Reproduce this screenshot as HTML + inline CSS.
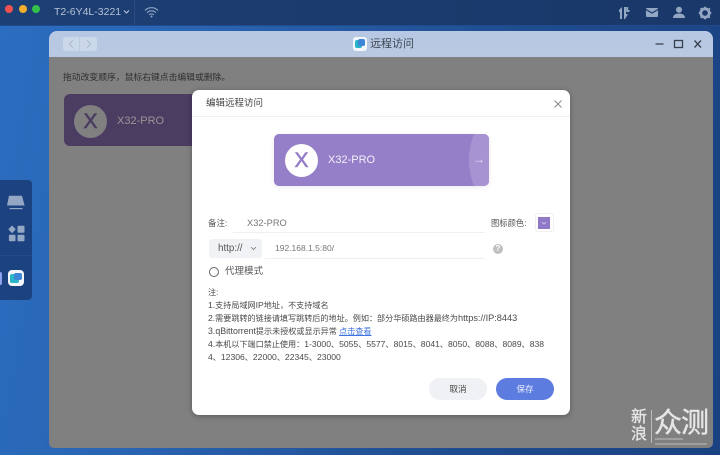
<!DOCTYPE html>
<html lang="zh"><head><meta charset="utf-8"><style>
*{box-sizing:border-box;margin:0;padding:0}
html,body{width:720px;height:455px;overflow:hidden;background:#16376f}
body{position:relative;font-family:"Liberation Sans","Noto Sans CJK SC",sans-serif}
#all{position:absolute;left:0;top:0;width:720px;height:455px;filter:blur(.3px)}
.a{position:absolute;white-space:nowrap}
#bg{left:0;top:0;width:720px;height:455px;background:linear-gradient(100deg,#2b6dc0 0%,#2a64b2 25%,#1f4d90 65%,#1a4282 100%)}
#top{left:0;top:0;width:720px;height:25px;background:linear-gradient(90deg,#1d4074,#1b3a6e 50%,#1a3869);box-shadow:0 1px 0 #1f4a8c}
#win{left:49px;top:31px;width:664px;height:417px;background:#808080;border-radius:8px 8px 5px 5px;overflow:hidden}
#tb{left:0;top:0;width:664px;height:26px;background:linear-gradient(180deg,#b6c8e3,#b9c9e1)}
#modal{left:192px;top:90px;width:378px;height:325px;background:#fff;border-radius:7px;box-shadow:0 1px 6px rgba(0,0,0,.3)}
.line{position:absolute;height:1px;background:#eff0f3}
.t{font-size:8.500px;color:#555;line-height:13px}
.n{font-size:8.100px;color:#4a4a4a;line-height:13px;left:16px}
.n b{font-weight:normal;font-size:9.200px}
.n i{font-style:normal;font-size:8.600px}
.n u{text-decoration:none;font-size:8.800px}
.x{font-size:21px;line-height:33px;text-align:center;-webkit-text-stroke:.6px currentColor}
</style></head><body><div id="all">
<div class="a" id="bg"></div>
<div class="a" id="top"></div>
<div class="a" style="left:5px;top:5px;width:8px;height:8px;border-radius:50%;background:#f0524f"></div>
<div class="a" style="left:19px;top:5px;width:8px;height:8px;border-radius:50%;background:#f3b02c"></div>
<div class="a" style="left:32px;top:5px;width:8px;height:8px;border-radius:50%;background:#33c24a"></div>
<div class="a" style="left:54px;top:5px;font-size:10.500px;line-height:14px;color:#b4c1d6">T2-6Y4L-3221</div>
<svg class="a" style="left:123px;top:9px" width="7" height="6"><path d="M1 1.500 3.500 4 6 1.500" fill="none" stroke="#c2cede" stroke-width="1"/></svg>
<div class="a" style="left:134px;top:0;width:1px;height:25px;background:#2a4a80"></div>
<svg class="a" style="left:144px;top:6px" width="15" height="12" fill="none" stroke="#8fa5c4" stroke-width="1.100"><path d="M1 4.500C4.500 .8 10.500 .8 14 4.500M3 6.800C5.500 4.200 9.500 4.200 12 6.800M5.200 8.800C6.400 7.600 8.600 7.600 9.800 8.800"/><circle cx="7.500" cy="10.500" r="1" fill="#8fa5c4" stroke="none"/></svg>
<svg class="a" style="left:618px;top:6px" width="100" height="14" fill="#93a6c2">
<path d="M1 4 4 1V13H2V6H1ZM6 1H8V8H10L7 13H6Z M8.200 1H10.200V4H11.500V6H8.200Z"/>
<rect x="28" y="2" width="12" height="9" rx="1"/><path d="M28 3.500 34 7 40 3.500" stroke="#1b3a6e" stroke-width="1.200" fill="none"/>
<circle cx="61" cy="3.800" r="3"/><path d="M55 12C55 8.500 58 7.500 61 7.500S67 8.500 67 12Z"/>
<circle cx="87" cy="7" r="4.200" fill="none" stroke="#93a6c2" stroke-width="2.800"/><path d="M86 .8H88V3H86ZM86 11H88V13.200H86ZM80.800 6H83V8H80.800ZM91 6H93.200V8H91ZM82 2.800 83.500 1.600 84.500 3 83 4.200ZM90 11 91.500 9.800 92.400 11.200 91 12.400ZM90 3 91.500 1.600 92.400 2.800 91 4.200ZM82 11.200 83 9.800 84.500 11 83.500 12.400Z"/></svg>

<div class="a" style="left:0;top:180px;width:32px;height:120px;background:#1c4280;border-radius:0 4px 4px 0"></div>
<svg class="a" style="left:6px;top:195px" width="20" height="16" fill="#94a7c4"><path d="M3 .8H16L18.600 10.500H1Z"/><rect x="3.500" y="13" width="13" height="1.200"/></svg>
<svg class="a" style="left:8px;top:225px" width="18" height="18" fill="#94a7c4"><path d="M4 .5 7.800 4.300 4 8.200 .3 4.300Z"/><rect x="9.500" y=".8" width="7" height="7" rx="1"/><rect x=".9" y="9.700" width="6.600" height="6.600" rx="1"/><rect x="9.500" y="9.700" width="7" height="6.600" rx="1"/></svg>
<div class="a" style="left:0;top:255px;width:32px;height:1px;background:#234c8a"></div>
<div class="a" style="left:0;top:272px;width:2px;height:13px;background:#8ea2f0;border-radius:0 2px 2px 0"></div>
<div class="a" style="left:8px;top:270px;width:16px;height:16px;background:#f4f7fb;border-radius:4px"></div>
<div class="a" style="left:10px;top:274px;width:9px;height:9px;background:#28b6c8;border-radius:2px"></div>
<div class="a" style="left:14px;top:273px;width:8px;height:7px;background:#3e86d8;border-radius:2px"></div>

<div class="a" id="win">
 <div class="a" id="tb"></div>
 <div class="a" style="left:14px;top:6px;width:34px;height:14px;background:#cbd8ea;border-radius:3px"></div>
 <div class="a" style="left:30px;top:6px;width:1px;height:14px;background:#b9c9e1"></div>
 <svg class="a" style="left:14px;top:6px" width="34" height="14" fill="none" stroke="#adbbd0" stroke-width="1"><path d="M10 3 6.500 7 10 11M24 3 27.500 7 24 11"/></svg>
 <div class="a" style="left:304px;top:6px;width:14px;height:14px;background:#f3f7fb;border-radius:3px"></div>
 <div class="a" style="left:306px;top:9px;width:7px;height:8px;background:#27b4c6;border-radius:2px"></div>
 <div class="a" style="left:309px;top:8px;width:7px;height:7px;background:#3d85d6;border-radius:2px"></div>
 <div class="a" style="left:321px;top:5px;font-size:11px;line-height:16px;color:#3d4650">远程访问</div>
 <svg class="a" style="left:604px;top:7px" width="54" height="12" fill="none" stroke="#37414e" stroke-width="1.300"><path d="M2.500 6H10.500"/><rect x="21.500" y="2.500" width="8" height="7"/><path d="M41.500 2.500 48 9.500M48 2.500 41.500 9.500"/></svg>
 <div class="a" style="left:14px;top:40px;font-size:8.800px;line-height:13px;color:#2e2e2e">拖动改变顺序，鼠标右键点击编辑或删除。</div>
 <div class="a" style="left:15px;top:63px;width:140px;height:52px;background:#4b3c62;border-radius:6px"></div>
 <div class="a x" style="left:25px;top:74px;width:33px;height:33px;border-radius:50%;background:#808080;color:#4b3c62">X</div>
 <div class="a" style="left:68px;top:83px;font-size:11px;line-height:14px;color:#979797">X32-PRO</div>
</div>

<div class="a" id="modal">
 <div class="a" style="left:14px;top:7px;font-size:9.500px;line-height:14px;color:#444">编辑远程访问</div>
 <svg class="a" style="left:361px;top:9px" width="10" height="10" fill="none" stroke="#8a8a8a" stroke-width="1"><path d="M1.500 1.500 8.500 8.500M8.500 1.500 1.500 8.500"/></svg>
 <div class="line" style="left:0;top:26px;width:378px"></div>

 <div class="a" style="left:82px;top:44px;width:215px;height:52px;border-radius:5px;background:#957fc8;overflow:hidden;box-shadow:0 1px 5px rgba(80,60,140,.12)">
  <div class="a" style="left:195px;top:-20px;width:60px;height:92px;border-radius:50%;background:#a893d2"></div>
  <div class="a" style="left:199px;top:18px;font-size:12px;line-height:14px;color:#e9e3f5">→</div>
  <div class="a x" style="left:11px;top:10px;width:33px;height:33px;border-radius:50%;background:#fff;color:#957fc8">X</div>
  <div class="a" style="left:54px;top:19px;font-size:11px;line-height:14px;color:#f3effa">X32-PRO</div>
 </div>

 <div class="a t" style="left:16px;top:127px">备注:</div>
 <div class="a t" style="left:55px;top:127px;color:#777;font-size:9.300px">X32-PRO</div>
 <div class="line" style="left:41px;top:142px;width:252px"></div>
 <div class="a t" style="left:299px;top:127px;font-size:8.300px">图标颜色:</div>
 <div class="a" style="left:343px;top:123px;width:19px;height:19px;border:1px solid #f0f0f3;border-radius:3px"></div>
 <div class="a" style="left:346px;top:127px;width:12px;height:12px;background:#8f78c6"></div>
 <svg class="a" style="left:349px;top:131px" width="6" height="4"><path d="M1 1 3 3 5 1" fill="none" stroke="#d7cdee" stroke-width=".8"/></svg>

 <div class="a" style="left:17px;top:149px;width:53px;height:19px;background:#f1f2f5;border-radius:3px"></div>
 <div class="a t" style="left:26px;top:152px;color:#555;font-size:9.800px">http://</div>
 <svg class="a" style="left:58px;top:156px" width="7" height="5"><path d="M1 1 3.500 3.500 6 1" fill="none" stroke="#777" stroke-width=".8"/></svg>
 <div class="a" style="left:83px;top:152px;font-size:8.500px;line-height:13px;color:#777">192.168.1.5:80/</div>
 <div class="line" style="left:73px;top:168px;width:220px"></div>
 <div class="a" style="left:301px;top:154px;width:10px;height:10px;border-radius:50%;background:#c0c0c0;color:#fff;font-size:8px;font-weight:bold;line-height:10px;text-align:center">?</div>

 <div class="a" style="left:17px;top:177px;width:10px;height:10px;border:1px solid #666;border-radius:50%"></div>
 <div class="a" style="left:33px;top:175px;font-size:9.500px;line-height:14px;color:#555">代理模式</div>

 <div class="a n" style="top:196px">注:</div>
 <div class="a n" style="top:209px"><i>1.</i>支持局域网<i>IP</i>地址，不支持域名</div>
 <div class="a n" style="top:222px"><i>2.</i>需要跳转的链接请填写跳转后的地址。例如：部分华硕路由器最终为<b>https://IP:8443</b></div>
 <div class="a n" style="top:235px"><u>3.qBittorrent</u>提示未授权或显示异常 <span style="color:#3e72e0;text-decoration:underline">点击查看</span></div>
 <div class="a n" style="top:248px"><i>4.</i>本机以下端口禁止使用：<i>1-3000</i>、<i>5055</i>、<i>5577</i>、<i>8015</i>、<i>8041</i>、<i>8050</i>、<i>8088</i>、<i>8089</i>、<i>838</i></div>
 <div class="a n" style="top:261px"><i>4</i>、<i>12306</i>、<i>22000</i>、<i>22345</i>、<i>23000</i></div>

 <div class="a" style="left:237px;top:288px;width:58px;height:22px;border-radius:11px;background:#f0f1f5;color:#444;font-size:8.500px;line-height:22px;text-align:center">取消</div>
 <div class="a" style="left:304px;top:288px;width:58px;height:22px;border-radius:11px;background:#5d7ce0;color:#e8edfb;font-size:8.500px;line-height:22px;text-align:center">保存</div>
</div>

<div class="a" style="left:631px;top:409px;width:18px;font-size:16px;line-height:17px;color:#e6e6e6;white-space:normal;-webkit-text-stroke:.3px #e6e6e6">新浪</div>
<div class="a" style="left:651px;top:410px;width:1px;height:33px;background:#bbb"></div>
<div class="a" style="left:654px;top:408px;font-size:28px;line-height:30px;letter-spacing:-1px;color:#e6e6e6;-webkit-text-stroke:.4px #e6e6e6">众测</div>
<div class="a" style="left:655px;top:438px;width:28px;height:2px;background:#a0a0a0"></div>
<div class="a" style="left:655px;top:443px;width:52px;height:2px;background:#a0a0a0"></div>
</div></body></html>
